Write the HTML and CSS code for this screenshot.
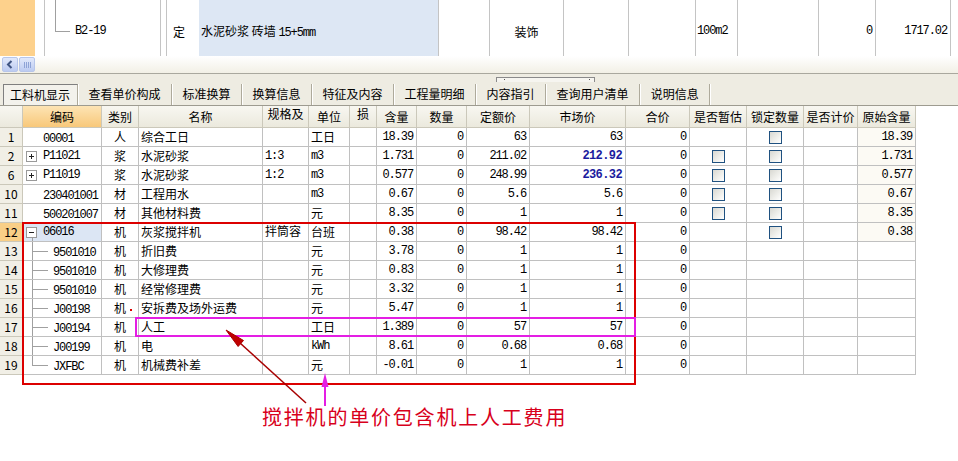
FILE: index.html
```html
<!DOCTYPE html>
<html lang="zh">
<head>
<meta charset="utf-8">
<title>工料机显示</title>
<link rel="stylesheet" href="styles.css">
</head>
<body>
<div class="page">
  <div class="toprow">
    <div class="tc t-a"></div>
    <div class="tc t-b"></div>
    <div class="tc t-c"><span class="m">B2-19</span></div>
    <div class="tc t-d"></div>
    <div class="tc t-e">定</div>
    <div class="tc t-f"><span>水泥砂浆 砖墙 <span class="m">15+5mm</span></span></div>
    <div class="tc t-g"></div>
    <div class="tc t-h">装饰</div>
    <div class="tc t-i"></div>
    <div class="tc t-j"></div>
    <div class="tc t-k"><span class="m">100m2</span></div>
    <div class="tc t-l"></div>
    <div class="tc t-m"><span class="m">0</span></div>
    <div class="tc t-n"><span class="m">1717.02</span></div>
    <div class="tc t-o"></div>
  </div>

  <div class="hscroll">
    <span class="sbtn"><svg width="14" height="13" viewBox="0 0 14 13"><polyline points="8.5,3 5,6.5 8.5,10" fill="none" stroke="#3f5482" stroke-width="2"/></svg></span>
    <span class="sthumb"></span>
  </div>

  <div class="tabbar">
    <div class="splitter"></div>
    <div class="tabs">
      <span class="tab on">工料机显示</span>
      <span class="tab">查看单价构成</span>
      <span class="tab">标准换算</span>
      <span class="tab">换算信息</span>
      <span class="tab">特征及内容</span>
      <span class="tab">工程量明细</span>
      <span class="tab">内容指引</span>
      <span class="tab">查询用户清单</span>
      <span class="tab">说明信息</span>
    </div>
  </div>

  <div class="g">
    <div class="h"></div><div class="h hs">编码</div><div class="h">类别</div><div class="h">名称</div><div class="h ht">规格及</div><div class="h">单位</div><div class="h ht">损</div><div class="h">含量</div><div class="h">数量</div><div class="h">定额价</div><div class="h">市场价</div><div class="h">合价</div><div class="h">是否暂估</div><div class="h">锁定数量</div><div class="h">是否计价</div><div class="h">原始含量</div>

    <div class="n">1</div><div class="code"><span class="m">00001</span></div><div class="k">人</div><div class="nm">综合工日</div><div class="nm"></div><div class="nm">工日</div><div></div><div class="r m">18.39</div><div class="r m">0</div><div class="r m">63</div><div class="r m">63</div><div class="r m">0</div><div></div><div class="c"><span class="cb"></span></div><div></div><div class="r m orig">18.39</div>

    <div class="n">2</div><div class="code bx"><span class="exp plus"></span><span class="m">P11021</span></div><div class="k">浆</div><div class="nm">水泥砂浆</div><div class="nm m">1:3</div><div class="nm m">m3</div><div></div><div class="r m">1.731</div><div class="r m">0</div><div class="r m">211.02</div><div class="r m blue">212.92</div><div class="r m">0</div><div class="c"><span class="cb"></span></div><div class="c"><span class="cb"></span></div><div></div><div class="r m orig">1.731</div>

    <div class="n">6</div><div class="code bx"><span class="exp plus"></span><span class="m">P11019</span></div><div class="k">浆</div><div class="nm">水泥砂浆</div><div class="nm m">1:2</div><div class="nm m">m3</div><div></div><div class="r m">0.577</div><div class="r m">0</div><div class="r m">248.99</div><div class="r m blue">236.32</div><div class="r m">0</div><div class="c"><span class="cb"></span></div><div class="c"><span class="cb"></span></div><div></div><div class="r m orig">0.577</div>

    <div class="n">10</div><div class="code"><span class="m">230401001</span></div><div class="k">材</div><div class="nm">工程用水</div><div class="nm"></div><div class="nm m">m3</div><div></div><div class="r m">0.67</div><div class="r m">0</div><div class="r m">5.6</div><div class="r m">5.6</div><div class="r m">0</div><div class="c"><span class="cb"></span></div><div class="c"><span class="cb"></span></div><div></div><div class="r m orig">0.67</div>

    <div class="n">11</div><div class="code"><span class="m">500201007</span></div><div class="k">材</div><div class="nm">其他材料费</div><div class="nm"></div><div class="nm">元</div><div></div><div class="r m">8.35</div><div class="r m">0</div><div class="r m">1</div><div class="r m">1</div><div class="r m">0</div><div class="c"><span class="cb"></span></div><div class="c"><span class="cb"></span></div><div></div><div class="r m orig">8.35</div>

    <div class="n sel">12</div><div class="code bx cur"><span class="exp minus"></span><span class="m">06016</span></div><div class="k">机</div><div class="nm">灰浆搅拌机</div><div class="nm top">拌筒容</div><div class="nm">台班</div><div></div><div class="r m">0.38</div><div class="r m">0</div><div class="r m">98.42</div><div class="r m">98.42</div><div class="r m">0</div><div></div><div class="c"><span class="cb"></span></div><div></div><div class="r m orig">0.38</div>

    <div class="n">13</div><div class="code ch"><span class="m">9501010</span></div><div class="k">机</div><div class="nm">折旧费</div><div class="nm"></div><div class="nm">元</div><div></div><div class="r m">3.78</div><div class="r m">0</div><div class="r m">1</div><div class="r m">1</div><div class="r m">0</div><div></div><div></div><div></div><div></div>

    <div class="n">14</div><div class="code ch"><span class="m">9501010</span></div><div class="k">机</div><div class="nm">大修理费</div><div class="nm"></div><div class="nm">元</div><div></div><div class="r m">0.83</div><div class="r m">0</div><div class="r m">1</div><div class="r m">1</div><div class="r m">0</div><div></div><div></div><div></div><div></div>

    <div class="n">15</div><div class="code ch"><span class="m">9501010</span></div><div class="k">机</div><div class="nm">经常修理费</div><div class="nm"></div><div class="nm">元</div><div></div><div class="r m">3.32</div><div class="r m">0</div><div class="r m">1</div><div class="r m">1</div><div class="r m">0</div><div></div><div></div><div></div><div></div>

    <div class="n">16</div><div class="code ch"><span class="m">J00198</span></div><div class="k">机</div><div class="nm">安拆费及场外运费</div><div class="nm"></div><div class="nm">元</div><div></div><div class="r m">5.47</div><div class="r m">0</div><div class="r m">1</div><div class="r m">1</div><div class="r m">0</div><div></div><div></div><div></div><div></div>

    <div class="n">17</div><div class="code ch"><span class="m">J00194</span></div><div class="k">机</div><div class="nm">人工</div><div class="nm"></div><div class="nm">工日</div><div></div><div class="r m">1.389</div><div class="r m">0</div><div class="r m">57</div><div class="r m">57</div><div class="r m">0</div><div></div><div></div><div></div><div></div>

    <div class="n">18</div><div class="code ch"><span class="m">J00199</span></div><div class="k">机</div><div class="nm">电</div><div class="nm"></div><div class="nm m">kWh</div><div></div><div class="r m">8.61</div><div class="r m">0</div><div class="r m">0.68</div><div class="r m">0.68</div><div class="r m">0</div><div></div><div></div><div></div><div></div>

    <div class="n">19</div><div class="code ch last"><span class="m">JXFBC</span></div><div class="k">机</div><div class="nm">机械费补差</div><div class="nm"></div><div class="nm">元</div><div></div><div class="r m">-0.01</div><div class="r m">0</div><div class="r m">1</div><div class="r m">1</div><div class="r m">0</div><div></div><div></div><div></div><div></div>
  </div>

  <svg class="ov" width="958" height="461" viewBox="0 0 958 461">
    <rect x="23" y="223" width="612" height="161" fill="none" stroke="#dc0000" stroke-width="2"/>
    <rect x="136" y="318" width="499" height="18" fill="none" stroke="#e41ee4" stroke-width="2"/>
    <rect x="130" y="309" width="2" height="2" fill="#dc0000"/>
    <line x1="306" y1="403" x2="240" y2="343" stroke="#a80000" stroke-width="1.5"/>
    <polygon points="226,330 243.5,340.5 238.1,346.5" fill="#c00000" stroke="#a80000" stroke-width="1"/>
    <line x1="325" y1="386" x2="325" y2="406" stroke="#e41ee4" stroke-width="2"/>
    <polygon points="325,373 321.5,387 328.5,387" fill="#e41ee4"/>
  </svg>
  <div class="note">搅拌机的单价包含机上人工费用</div>
</div>
</body>
</html>
```
FILE: styles.css
```css
* { box-sizing: border-box; }
html, body { margin: 0; padding: 0; }
body {
  width: 958px;
  height: 461px;
  overflow: hidden;
  background: #fff;
  font-family: "Noto Sans CJK SC", "Noto Sans", sans-serif;
  font-size: 12px;
  color: #000;
}
.page { position: relative; width: 958px; height: 461px; }

.m {
  font-family: "Liberation Mono", "Noto Sans CJK SC", monospace;
  font-size: 12px;
  letter-spacing: -1.1px;
}

/* top row */
.toprow { display: flex; height: 56px; }
.tc {
  border-right: 1px solid #c4c4c4;
  display: flex;
  align-items: center;
  padding-top: 6px;
  white-space: nowrap;
  overflow: hidden;
}
.t-a { width: 35px; background: #fdd18c; border-right: none; }
.t-b { width: 10px; }
.t-c {
  width: 116px;
  padding-left: 30px;
  background:
    linear-gradient(#a0a0a0, #a0a0a0) 10px 0 / 1px 31px no-repeat,
    linear-gradient(#a0a0a0, #a0a0a0) 10px 31px / 15px 1px no-repeat;
}
.t-d { width: 6px; }
.t-e { width: 32px; border-right: none; padding-left: 6px; }
.t-f { width: 240px; background: #dde7f4; padding-left: 2px; }
.t-g { width: 51px; }
.t-h { width: 74px; justify-content: center; }
.t-i { width: 65px; }
.t-j { width: 67px; }
.t-k { width: 42px; padding-left: 1px; }
.t-l { width: 81px; }
.t-m { width: 57px; justify-content: flex-end; padding-right: 3px; }
.t-n { width: 75px; justify-content: flex-end; padding-right: 3px; }
.t-o { flex: 1; border-right: none; }

/* horizontal scrollbar */
.hscroll {
  height: 18px;
  padding: 1px 0 1px 2px;
  display: flex;
  gap: 1px;
  background: linear-gradient(#ffffff, #f2f0e6);
  border-bottom: 1px solid #a9a89e;
}
.sbtn, .sthumb {
  width: 16px;
  height: 15px;
  border: 1px solid #b7c6ea;
  border-radius: 2px;
  background: linear-gradient(#e2e9fb, #bccbf1);
  display: flex;
  align-items: center;
  justify-content: center;
}
.sthumb {
  background:
    repeating-linear-gradient(90deg, #8ea3d6 0 1px, transparent 1px 2px) 4px 4px / 7px 6px no-repeat,
    linear-gradient(#e2e9fb, #bccbf1);
}

/* tabs */
.tabbar {
  height: 32px;
  background: #eeece2;
  border-bottom: 1px solid #9d9b90;
  padding-top: 3px;
}
.splitter {
  margin-left: 496px;
  width: 99px;
  height: 5px;
  border: 1px solid #8a8a8a;
  border-bottom: none;
  background:
    linear-gradient(#555, #555) 7px 1px / 1px 1px no-repeat,
    linear-gradient(#555, #555) 92px 1px / 1px 1px no-repeat,
    #f6f5f0;
}
.tabs {
  margin-top: 2px;
  display: flex;
  height: 21px;
  padding-left: 3px;
}
.tab {
  height: 21px;
  line-height: 20px;
  padding: 0 10.5px;
  border-right: 1px solid #aeaa9b;
  box-shadow: 1px 0 0 #ffffff;
  white-space: nowrap;
}
.tab.on {
  padding: 0 7px 0 6px;
  border-left: 1px solid #7f7f7f;
  border-top: 1px solid #7f7f7f;
  background: #f3f2ec;
  line-height: 19px;
}

/* grid */
.g {
  display: grid;
  width: 916px;
  grid-template-columns: 23px 79px 37px 124px 46px 41px 27px 40px 50px 63px 96px 64px 57px 57px 54px 58px;
  grid-template-rows: 22px repeat(13, 19px);
}
.g > div {
  border-right: 1px solid #c0c0c0;
  border-bottom: 1px solid #c0c0c0;
  line-height: 18px;
  white-space: nowrap;
  overflow: hidden;
}
.g > .h {
  background: linear-gradient(#f8f7f1, #ebe9dd);
  border-color: #cbc8ba;
  text-align: center;
  line-height: 21px;
}
.g > .hs { background: linear-gradient(#fde4b4, #f8c87a); }
.g > .ht { line-height: 15px; }

.g > .n {
  background: #f1efe6;
  text-align: center;
  border-color: #cbc8ba;
}
.g > .n.sel { background: #f9cf87; }
.g > .k { text-align: center; }
.g > .nm { padding-left: 2px; }
.g > .top { line-height: 15px; }
.g > .r { text-align: right; padding-right: 3px; }
.g > .orig { background: #fcfaf4; }
.blue { color: #1b1b9e; font-weight: bold; letter-spacing: -0.6px; }

.g > .code { padding-left: 20px; }
.g > .code.bx { padding-left: 3px; display: flex; align-items: center; }
.g > .code.ch {
  padding-left: 30px;
  background:
    linear-gradient(#a0a0a0, #a0a0a0) 9px 0 / 1px 100% no-repeat,
    linear-gradient(#a0a0a0, #a0a0a0) 9px 9px / 16px 1px no-repeat;
}
.g > .code.ch.last {
  background:
    linear-gradient(#a0a0a0, #a0a0a0) 9px 0 / 1px 10px no-repeat,
    linear-gradient(#a0a0a0, #a0a0a0) 9px 9px / 16px 1px no-repeat;
}
.g > .code.cur {
  background:
    linear-gradient(#a0a0a0, #a0a0a0) 9px 14px / 1px 5px no-repeat,
    #dce6f4;
}
.exp {
  width: 11px;
  height: 11px;
  border: 1px solid #9a9a9a;
  margin-right: 6px;
  flex: none;
  background-color: #fff;
}
.exp.plus {
  background:
    linear-gradient(#222, #222) 2px 4px / 5px 1px no-repeat,
    linear-gradient(#222, #222) 4px 2px / 1px 5px no-repeat,
    #fff;
}
.exp.minus {
  background:
    linear-gradient(#222, #222) 2px 4px / 5px 1px no-repeat,
    #fff;
}

.g > .c { display: flex; align-items: center; justify-content: center; }
.cb {
  width: 13px;
  height: 13px;
  border: 1px solid #1f5180;
  background: linear-gradient(135deg, #d8d8d2 0%, #eeeeea 55%, #ffffff 100%);
}

/* annotations */
.ov { position: absolute; left: 0; top: 0; pointer-events: none; }
.note {
  position: absolute;
  left: 262px;
  top: 406px;
  font-size: 20px;
  line-height: 22px;
  letter-spacing: 1.8px;
  color: #d8001c;
  white-space: nowrap;
}
```
